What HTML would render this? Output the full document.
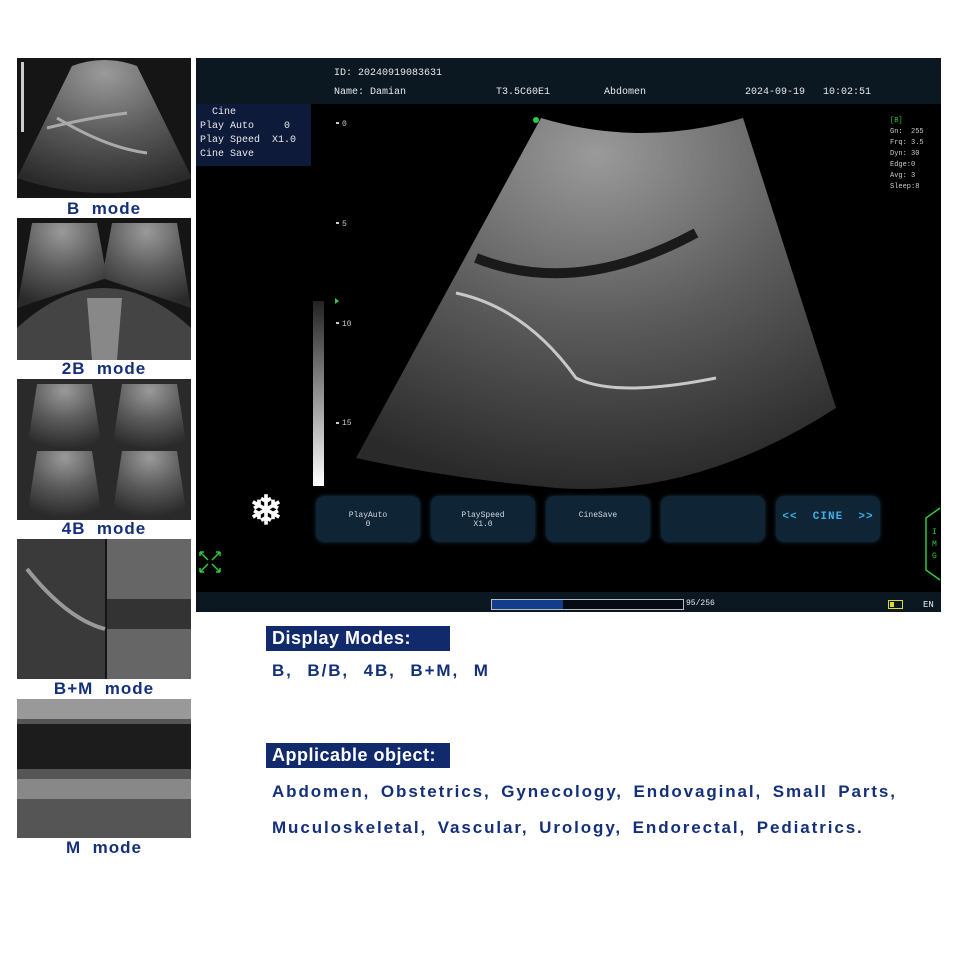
<!DOCTYPE html>
<html><head><meta charset="utf-8"><style>
body{margin:0;width:960px;height:960px;background:#fff;position:relative;overflow:hidden;font-family:"Liberation Sans",sans-serif}
.a{position:absolute}
.th{position:absolute;left:17px;width:174px;background:#151515;overflow:hidden}
.lb{position:absolute;left:17px;width:174px;text-align:center;color:#14307a;font-weight:bold;font-size:17px;letter-spacing:1px}
.mono{font-family:"Liberation Mono",monospace;color:#e8e8e8}
.btn{position:absolute;top:496px;width:104px;height:46px;background:#0f2535;border-radius:8px;box-shadow:0 0 4px #16364a;color:#cfd8e0;font-family:"Liberation Mono",monospace;font-size:8px;text-align:center;line-height:9px;padding-top:15px;box-sizing:border-box}
.hd{position:absolute;left:266px;width:184px;height:25px;background:#112a6b;color:#fff;font-weight:bold;font-size:18px;line-height:25px;padding-left:6px;box-sizing:border-box;letter-spacing:.5px}
.tx{position:absolute;left:272px;color:#14307a;font-weight:bold;font-size:17px;letter-spacing:1.9px;word-spacing:4px}
</style></head><body>
<svg width="0" height="0" style="position:absolute"><defs>
<radialGradient id="g" cx="0.5" cy="0.1" r="0.9"><stop offset="0" stop-color="#9a9a9a"/><stop offset=".5" stop-color="#5c5c5c"/><stop offset="1" stop-color="#2a2a2a"/></radialGradient>
</defs></svg>
<!-- thumbnails -->
<div class="th" style="top:58px;height:140px"><svg width="174" height="140"><path d="M55 8Q87 -4 120 8L175 120Q87 150 0 120Z" fill="url(#g)"/><path d="M30 70Q70 60 110 55M40 60Q90 90 130 95" stroke="#aaa" stroke-width="3" fill="none"/><rect x="4" y="4" width="3" height="70" fill="#ccc"/></svg></div>
<div class="lb" style="top:199px">B&nbsp; mode</div>
<div class="th" style="top:218px;height:142px"><svg width="174" height="142"><path d="M15 5L80 5L90 60L0 90Z" fill="url(#g)"/><path d="M95 5L160 5L174 90L85 60Z" fill="url(#g)"/><path d="M0 110Q87 30 174 110L174 142L0 142Z" fill="#444"/><path d="M70 80L105 80L100 142L75 142Z" fill="#888"/></svg></div>
<div class="lb" style="top:359px">2B&nbsp; mode</div>
<div class="th" style="top:379px;height:141px;background:#2a2a2a"><svg width="174" height="141"><path d="M20 5L75 5L85 70L10 70Z" fill="url(#g)"/><path d="M105 5L160 5L170 70L95 70Z" fill="url(#g)"/><path d="M20 72L75 72L85 138L10 138Z" fill="url(#g)"/><path d="M105 72L160 72L170 138L95 138Z" fill="url(#g)"/></svg></div>
<div class="lb" style="top:519px">4B&nbsp; mode</div>
<div class="th" style="top:539px;height:140px"><svg width="174" height="140"><path d="M0 0L88 0L88 140L0 140Z" fill="#3a3a3a"/><path d="M10 30Q50 80 88 90" stroke="#999" stroke-width="4" fill="none"/><rect x="90" y="0" width="84" height="140" fill="#666"/><rect x="90" y="60" width="84" height="30" fill="#333"/></svg></div>
<div class="lb" style="top:679px">B+M&nbsp; mode</div>
<div class="th" style="top:699px;height:139px;background:#555"><svg width="174" height="139"><rect y="0" width="174" height="20" fill="#999"/><rect y="25" width="174" height="45" fill="#1c1c1c"/><rect y="80" width="174" height="20" fill="#888"/></svg></div>
<div class="lb" style="top:838px">M&nbsp; mode</div>

<!-- main screen -->
<div class="a" style="left:196px;top:58px;width:745px;height:554px;background:#000">
 <div class="a" style="left:0;top:0;width:745px;height:46px;background:#0b1822"></div>
 <div class="a mono" style="left:138px;top:10px;font-size:10px">ID: 20240919083631</div>
 <div class="a mono" style="left:138px;top:29px;font-size:10px">Name: Damian</div>
 <div class="a mono" style="left:300px;top:29px;font-size:10px">T3.5C60E1</div>
 <div class="a mono" style="left:408px;top:29px;font-size:10px">Abdomen</div>
 <div class="a mono" style="left:549px;top:29px;font-size:10px">2024-09-19&nbsp;&nbsp;&nbsp;10:02:51</div>
 <div class="a mono" style="left:0;top:46px;width:115px;height:62px;background:#0d1a3a;font-size:10px;line-height:14px;padding:2px 4px;box-sizing:border-box;white-space:pre">  Cine
Play Auto     0
Play Speed  X1.0
Cine Save</div>
 <svg class="a" style="left:0;top:0" width="745" height="554">
  <path d="M345 60Q445 90 547 60L640 350Q500 440 360 430Q250 420 160 400Z" fill="url(#g)"/>
  <path d="M280 200Q380 240 500 175" stroke="#1a1a1a" stroke-width="10" fill="none"/>
  <path d="M260 235Q330 250 380 320Q420 340 520 320" stroke="#c8c8c8" stroke-width="3" fill="none"/>
  <circle cx="340" cy="62" r="3" fill="#2ecc40"/>
  <g fill="#ccc"><rect x="140" y="64" width="3" height="2"/><rect x="140" y="164" width="3" height="2"/><rect x="140" y="264" width="3" height="2"/><rect x="140" y="364" width="3" height="2"/></g>
  <text x="146" y="68" fill="#ccc" font-size="8" font-family="Liberation Mono">0</text>
  <text x="146" y="168" fill="#ccc" font-size="8" font-family="Liberation Mono">5</text>
  <text x="146" y="268" fill="#ccc" font-size="8" font-family="Liberation Mono">10</text>
  <text x="146" y="367" fill="#ccc" font-size="8" font-family="Liberation Mono">15</text>
  <defs><linearGradient id="v" x1="0" y1="0" x2="0" y2="1"><stop offset="0" stop-color="#222"/><stop offset="1" stop-color="#fff"/></linearGradient></defs>
  <rect x="117" y="243" width="11" height="185" fill="url(#v)"/>
  <path d="M139 240l4 3-4 3z" fill="#2ecc40"/>
  <text x="70" y="466" fill="#fff" font-size="40" font-weight="bold" text-anchor="middle">❄</text>
  <g stroke="#2ecc40" stroke-width="1.5" fill="none"><path d="M4 494l8 8M4 494v4M4 494h4M24 494l-8 8M24 494v4M24 494h-4M4 514l8-8M4 514v-4M4 514h4M24 514l-8-8M24 514v-4M24 514h-4"/></g>
  <path d="M744 450L730 460V512L744 522" stroke="#2ecc40" stroke-width="1.5" fill="none"/>
  <text x="736" y="476" fill="#2ecc40" font-size="8" font-family="Liberation Mono">I</text>
  <text x="736" y="488" fill="#2ecc40" font-size="8" font-family="Liberation Mono">M</text>
  <text x="736" y="500" fill="#2ecc40" font-size="8" font-family="Liberation Mono">G</text>
 </svg>
 <div class="a mono" style="left:694px;top:58px;font-size:7px;line-height:11px;color:#ccc"><span style="color:#2ecc40">[B]</span><br>Gn:&nbsp; 255<br>Frq: 3.5<br>Dyn: 30<br>Edge:0<br>Avg: 3<br>Sleep:8</div>
 <div class="a" style="left:0;top:534px;width:745px;height:20px;background:#0b1822"></div>
 <div class="a" style="left:295px;top:541px;width:191px;height:9px;border:1px solid #bbb;background:#050a14"><div style="width:71px;height:9px;background:#123d8c"></div></div>
 <div class="a mono" style="left:490px;top:541px;font-size:8px">95/256</div>
 <div class="a" style="left:692px;top:542px;width:15px;height:9px;border:1px solid #dada30;box-sizing:border-box"><div style="margin:1px;width:4px;height:5px;background:#dada30"></div></div>
 <div class="a mono" style="left:727px;top:542px;font-size:9px">EN</div>
</div>
<div class="btn" style="left:316px">PlayAuto<br>0</div>
<div class="btn" style="left:431px">PlaySpeed<br>X1.0</div>
<div class="btn" style="left:546px">CineSave</div>
<div class="btn" style="left:661px"></div>
<div class="btn" style="left:776px;color:#3fb0e8;font-size:11px;padding-top:17px;font-weight:bold;letter-spacing:1px">&lt;&lt;&nbsp; CINE &nbsp;&gt;&gt;</div>

<div class="hd" style="top:626px">Display Modes:</div>
<div class="tx" style="top:661px;word-spacing:8px">B, B/B, 4B, B+M, M</div>
<div class="hd" style="top:743px">Applicable object:</div>
<div class="tx" style="top:782px">Abdomen, Obstetrics, Gynecology, Endovaginal, Small Parts,</div>
<div class="tx" style="top:818px">Muculoskeletal, Vascular, Urology, Endorectal, Pediatrics.</div>
</body></html>
